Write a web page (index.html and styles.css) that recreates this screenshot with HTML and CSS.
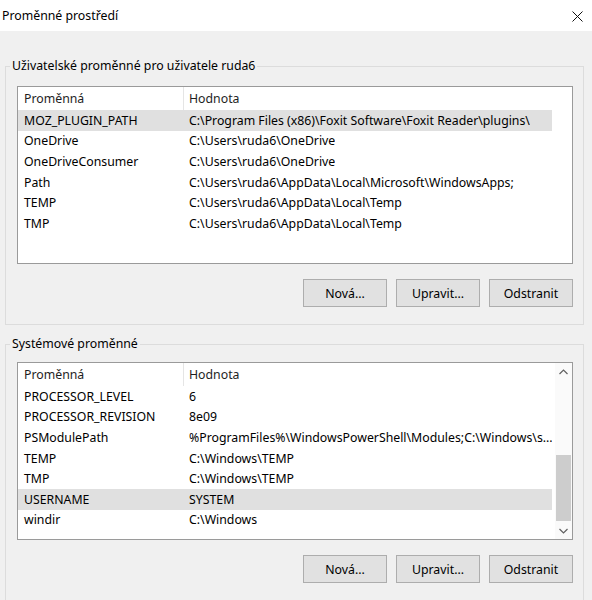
FILE: index.html
```html
<!DOCTYPE html>
<html lang="cs">
<head>
<meta charset="utf-8">
<title>Proměnné prostředí</title>
<link rel="stylesheet" href="styles.css">
</head>
<body>
<div class="window">
  <div class="titlebar">
    <span class="title">Proměnné prostředí</span>
    <svg class="close" width="11" height="11" viewBox="0 0 11 11"><path d="M0.5 0.5 L10.5 10.5 M10.5 0.5 L0.5 10.5" stroke="#111" stroke-width="1" fill="none"/></svg>
  </div>
  <div class="body">
    <div class="group g1">
      <span class="legend">Uživatelské proměnné pro uživatele ruda6</span>
      <div class="list">
        <div class="rows">
          <div class="hdr"><span class="c1">Proměnná</span><span class="div"></span><span class="c2">Hodnota</span></div>
          <div class="row sel"><span class="c1">MOZ_PLUGIN_PATH</span><span class="c2">C:\Program Files (x86)\Foxit Software\Foxit Reader\plugins\</span></div>
          <div class="row"><span class="c1">OneDrive</span><span class="c2">C:\Users\ruda6\OneDrive</span></div>
          <div class="row"><span class="c1">OneDriveConsumer</span><span class="c2">C:\Users\ruda6\OneDrive</span></div>
          <div class="row"><span class="c1">Path</span><span class="c2">C:\Users\ruda6\AppData\Local\Microsoft\WindowsApps;</span></div>
          <div class="row"><span class="c1">TEMP</span><span class="c2">C:\Users\ruda6\AppData\Local\Temp</span></div>
          <div class="row"><span class="c1">TMP</span><span class="c2">C:\Users\ruda6\AppData\Local\Temp</span></div>
        </div>
      </div>
      <div class="buttons">
        <button class="btn">Nová...</button>
        <button class="btn">Upravit...</button>
        <button class="btn">Odstranit</button>
      </div>
    </div>
    <div class="group g2">
      <span class="legend">Systémové proměnné</span>
      <div class="list">
        <div class="rows">
          <div class="hdr"><span class="c1">Proměnná</span><span class="div"></span><span class="c2">Hodnota</span></div>
          <div class="row"><span class="c1">PROCESSOR_LEVEL</span><span class="c2">6</span></div>
          <div class="row"><span class="c1">PROCESSOR_REVISION</span><span class="c2">8e09</span></div>
          <div class="row"><span class="c1">PSModulePath</span><span class="c2">%ProgramFiles%\WindowsPowerShell\Modules;C:\Windows\s...</span></div>
          <div class="row"><span class="c1">TEMP</span><span class="c2">C:\Windows\TEMP</span></div>
          <div class="row"><span class="c1">TMP</span><span class="c2">C:\Windows\TEMP</span></div>
          <div class="row sel"><span class="c1">USERNAME</span><span class="c2">SYSTEM</span></div>
          <div class="row"><span class="c1">windir</span><span class="c2">C:\Windows</span></div>
        </div>
        <div class="scrollbar">
          <div class="arrow"><svg width="9" height="6" viewBox="0 0 9 6"><path d="M0.5 5 L4.5 1 L8.5 5" stroke="#606060" stroke-width="1.2" fill="none"/></svg></div>
          <div class="track"><div class="thumb"></div></div>
          <div class="arrow"><svg width="9" height="6" viewBox="0 0 9 6"><path d="M0.5 1 L4.5 5 L8.5 1" stroke="#606060" stroke-width="1.2" fill="none"/></svg></div>
        </div>
      </div>
      <div class="buttons">
        <button class="btn">Nová...</button>
        <button class="btn">Upravit...</button>
        <button class="btn">Odstranit</button>
      </div>
    </div>
  </div>
</div>
</body>
</html>
```

FILE: styles.css
```css
* { box-sizing: border-box; }
body {
  margin: 0;
  font-family: "Noto Sans", "Open Sans", sans-serif;
  font-size: 12.3px;
  color: #000;
}
.window {
  width: 592px;
  height: 600px;
  overflow: hidden;
  background: #f0f0f0;
}
.titlebar {
  height: 31px;
  background: #fff;
  display: flex;
  align-items: center;
  justify-content: space-between;
  padding: 0 9px 0 2px;
}
.title { line-height: 16px; }
.close { display: block; margin-top: 1px; }
.body {
  padding: 35px 8px 0 5px;
}
.group {
  position: relative;
  border: 1px solid #dcdcdc;
  padding: 19px 10px 17px 11px;
}
.g2 {
  margin-top: 19px;
  padding-top: 17px;
  height: 300px;
}
.legend {
  position: absolute;
  top: -9px;
  left: 4px;
  padding: 0 2px;
  background: #f0f0f0;
  line-height: 16px;
  color: #000;
}
.list {
  height: 178px;
  border: 1px solid #9a9a9a;
  background: #fff;
  display: flex;
  overflow: hidden;
}
.rows {
  flex: 1;
  min-width: 0;
}
.hdr {
  height: 23px;
  width: 534px;
  display: flex;
  align-items: center;
  color: #1e1e1e;
}
.hdr .c1 { width: 165px; padding-left: 6px; }
.hdr .div { width: 1px; height: 100%; background: #e5e5e5; }
.hdr .c2 { padding-left: 5px; }
.row {
  height: 20.6px;
  width: 534px;
  display: flex;
  align-items: center;
  white-space: nowrap;
}
.row.sel { background: #e0e0e0; }
.row .c1 { width: 166px; padding-left: 6px; flex: none; }
.row .c2 { padding-left: 5px; overflow: hidden; }
.scrollbar {
  width: 17px;
  flex: none;
  display: flex;
  flex-direction: column;
  background: #fafafa;
}
.arrow {
  height: 17px;
  display: flex;
  align-items: center;
  justify-content: center;
}
.track {
  flex: 1;
  padding: 75px 1px 0;
}
.thumb {
  height: 66px;
  background: #cdcdcd;
}
.buttons {
  margin-top: 15px;
  display: flex;
  justify-content: flex-end;
  gap: 9px;
}
.btn {
  width: 84px;
  height: 28px;
  border: 1px solid #adadad;
  background: #e1e1e1;
  font-family: inherit;
  font-size: inherit;
  color: #000;
  padding: 0;
  margin: 0;
}
```
